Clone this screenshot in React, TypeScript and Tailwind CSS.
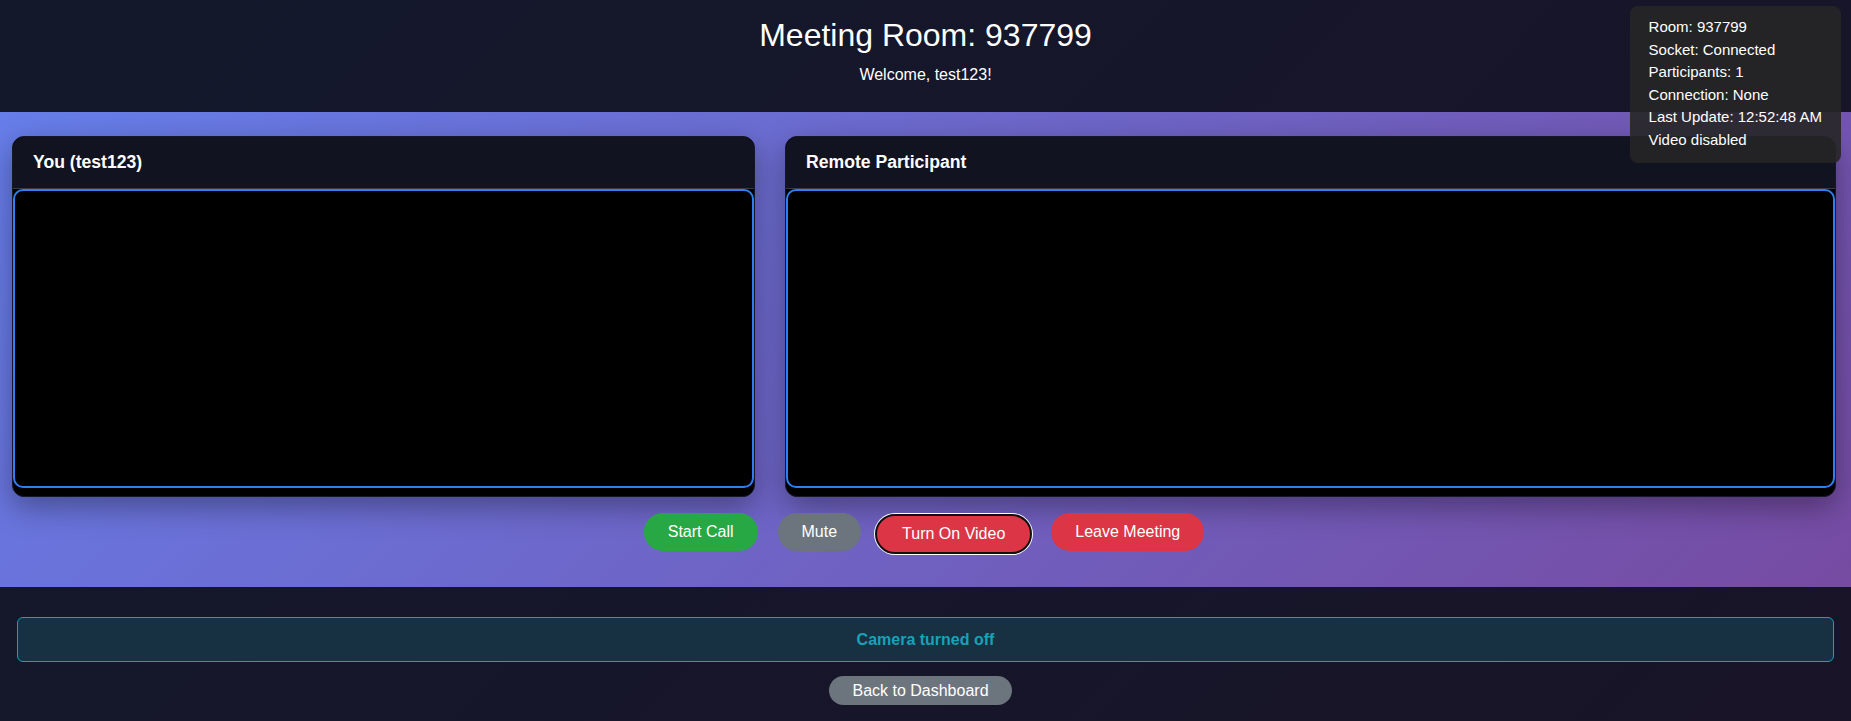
const font = { fontFamily: '"Liberation Sans", Arial, sans-serif' };

function StatusPanel() {
  const lines = [
    "Room: 937799",
    "Socket: Connected",
    "Participants: 1",
    "Connection: None",
    "Last Update: 12:52:48 AM",
    "Video disabled",
  ];
  return (
    <div className="absolute right-[10px] top-[6px] rounded-[8px] bg-[rgba(38,38,38,0.9)] px-[19px] pb-[11px] pt-[10px] text-[15px] leading-[22.6px] text-white">
      {lines.map((l) => (
        <div key={l}>{l}</div>
      ))}
    </div>
  );
}

function VideoCard({ title }: { title: string }) {
  return (
    <div className="overflow-hidden rounded-[12px] border border-[#15172a] bg-black shadow-[0_10px_30px_rgba(0,0,0,0.35)]">
      <div className="flex h-[52px] items-center border-b border-[#3a3a44] bg-[#121321] px-[20px] text-[17.6px] font-bold text-white">
        {title}
      </div>
      <div className="pb-[8px]">
        <div className="h-[299px] rounded-[10px] border-2 border-[#2f7ff0] bg-black" />
      </div>
    </div>
  );
}

export default function App() {
  return (
    <div
      className="min-h-[721px] w-full bg-[linear-gradient(135deg,#13182b_0%,#191428_100%)] text-white"
      style={font}
    >
      <div className="relative">
        <header className="flex h-[112px] flex-col items-center pt-[17px]">
          <h1 className="text-[32px] leading-[37px] font-normal">Meeting Room: 937799</h1>
          <p className="mt-[12px] text-[16px] leading-[18px]">Welcome, test123!</p>
        </header>

        <section className="bg-[linear-gradient(135deg,#667eea_0%,#764ba2_100%)] pb-[34px] pl-[12px] pr-[15px] pt-[24px]">
          <div className="grid grid-cols-[743px_1051px] gap-[30px]">
            <VideoCard title="You (test123)" />
            <VideoCard title="Remote Participant" />
          </div>
          <div className="mt-[16px] flex items-start justify-center gap-[20px]">
            <button className="h-[38px] rounded-full bg-[#28a745] px-[24px] text-[16px] text-white">
              Start Call
            </button>
            <button className="h-[38px] rounded-full bg-[#6c757d] px-[24px] text-[16px] text-white">
              Mute
            </button>
            <button className="-ml-[5px] mt-[2px] h-[38px] rounded-full bg-[#dc3545] px-[26px] text-[16px] text-white outline-2 outline-offset-[-1px] outline-[#101010] shadow-[0_0_0_2px_#ffffff]">
              Turn On Video
            </button>
            <button className="h-[38px] rounded-full bg-[#dc3545] px-[24px] text-[16px] text-white">
              Leave Meeting
            </button>
          </div>
        </section>

        <StatusPanel />
      </div>

      <div className="flex flex-col items-center px-[17px] pt-[30px]">
        <div className="flex h-[45px] w-full items-center justify-center rounded-[6px] border border-[#17a2b8] bg-[#173042] text-[16px] font-bold text-[#17a2b8]">
          Camera turned off
        </div>
        <button className="mr-[10px] mt-[14px] h-[29px] rounded-full bg-[#6c757d] px-[23px] text-[16px] text-white">
          Back to Dashboard
        </button>
      </div>
    </div>
  );
}
